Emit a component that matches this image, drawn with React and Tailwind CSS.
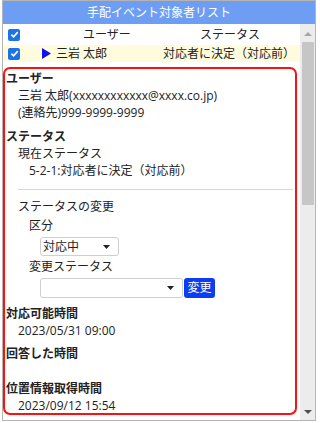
import React from 'react';

const font = { fontFamily: '"Open Sans", "Noto Sans CJK JP", sans-serif' };

const Check = () => (
  <span className="flex h-[12px] w-[12px] items-center justify-center rounded-[2px] bg-[#1a73e8]">
    <svg width="9" height="9" viewBox="0 0 10 10">
      <path d="M1.5 5.2 L4 7.6 L8.6 2.4" stroke="#fff" strokeWidth="1.8" fill="none" />
    </svg>
  </span>
);

const Caret = () => (
  <svg width="7" height="4" viewBox="0 0 7 4">
    <path d="M0 0 L7 0 L3.5 4 Z" fill="#222" />
  </svg>
);

const Label = ({ children, className = '' }) => (
  <div className={`pl-[1px] font-bold leading-[17px] ${className}`}>{children}</div>
);

const Line = ({ children, indent = 'pl-[13px]', className = '' }) => (
  <div className={`leading-[17px] ${indent} ${className}`}>{children}</div>
);

const App = () => {
  return (
    <div className="h-[423px] w-[320px] overflow-hidden bg-white text-[12px] text-[#222]" style={font}>
      <div className="ml-[2px] flex h-[421px] w-[314px] flex-col border border-[#b4b4b4]">
        <div className="flex h-[23px] shrink-0 items-center justify-center bg-[#6d9ef3] text-white">
          手配イベント対象者リスト
        </div>
        <div className="flex flex-1 overflow-hidden">
          <div className="flex-1 overflow-hidden">
            <div className="flex h-[21px] items-center">
              <div className="w-[27px] pl-[5px]"><Check /></div>
              <div className="w-[149px] pl-[53px]">ユーザー</div>
              <div className="pl-[21px]">ステータス</div>
            </div>
            <div className="flex h-[17px] items-center bg-[#fffbdc]">
              <div className="w-[27px] pl-[5px]"><Check /></div>
              <div className="flex w-[133px] items-center pl-[12px]">
                <svg width="9" height="11" viewBox="0 0 9 11" className="mr-[5px]">
                  <path d="M0 0 L9 5.5 L0 11 Z" fill="#1010f0" />
                </svg>
                三岩 太郎
              </div>
              <div>対応者に決定（対応前）</div>
            </div>
            <div className="mt-[5px] h-[348px] w-[294px] overflow-hidden rounded-[7px] border-2 border-[#ff1010] pt-[1px]">
              <Label>ユーザー</Label>
              <Line>三岩 太郎(xxxxxxxxxxxx@xxxx.co.jp)</Line>
              <Line>(連絡先)999-9999-9999</Line>
              <Label className="mt-[7px]">ステータス</Label>
              <Line>現在ステータス</Line>
              <Line indent="pl-[24px]">5-2-1:対応者に決定（対応前）</Line>
              <div className="ml-[13px] mr-[2px] mt-[10px] border-t border-[#d8d8d8]" />
              <Line className="mt-[8px]">ステータスの変更</Line>
              <Line indent="pl-[24px]" className="mt-[2px]">区分</Line>
              <div className="ml-[35px] mt-[3px] flex h-[19px] w-[79px] items-center justify-between rounded-[3px] border border-[#cfcfcf] pl-[2px] pr-[8px]">
                <span>対応中</span>
                <Caret />
              </div>
              <Line indent="pl-[24px]" className="mt-[2px]">変更ステータス</Line>
              <div className="ml-[35px] mt-[3px] flex items-center">
                <div className="flex h-[20px] w-[143px] items-center justify-end rounded-[3px] border border-[#cfcfcf] pr-[8px]">
                  <Caret />
                </div>
                <div className="ml-[1px] flex h-[20px] w-[31px] items-center justify-center rounded-[3px] bg-[#0d3cf5] text-white">
                  変更
                </div>
              </div>
              <Label className="mt-[7px]">対応可能時間</Label>
              <Line>2023/05/31 09:00</Line>
              <Label className="mt-[6px]">回答した時間</Label>
              <Label className="mt-[18px]">位置情報取得時間</Label>
              <Line>2023/09/12 15:54</Line>
            </div>
          </div>
          <div className="flex w-[15px] shrink-0 flex-col items-center bg-[#ececec]">
            <div className="flex h-[18px] items-center justify-center pt-[1px]">
              <svg width="8" height="4" viewBox="0 0 8 4">
                <path d="M0 4 L8 4 L4 0 Z" fill="#a6a6a6" />
              </svg>
            </div>
            <div className="h-[163px] w-[12px] bg-[#c6c6c6]" />
            <div className="flex-1" />
            <div className="flex h-[17px] items-center justify-center">
              <svg width="8" height="4" viewBox="0 0 8 4">
                <path d="M0 0 L8 0 L4 4 Z" fill="#505050" />
              </svg>
            </div>
          </div>
        </div>
      </div>
    </div>
  );
};

export default App;
